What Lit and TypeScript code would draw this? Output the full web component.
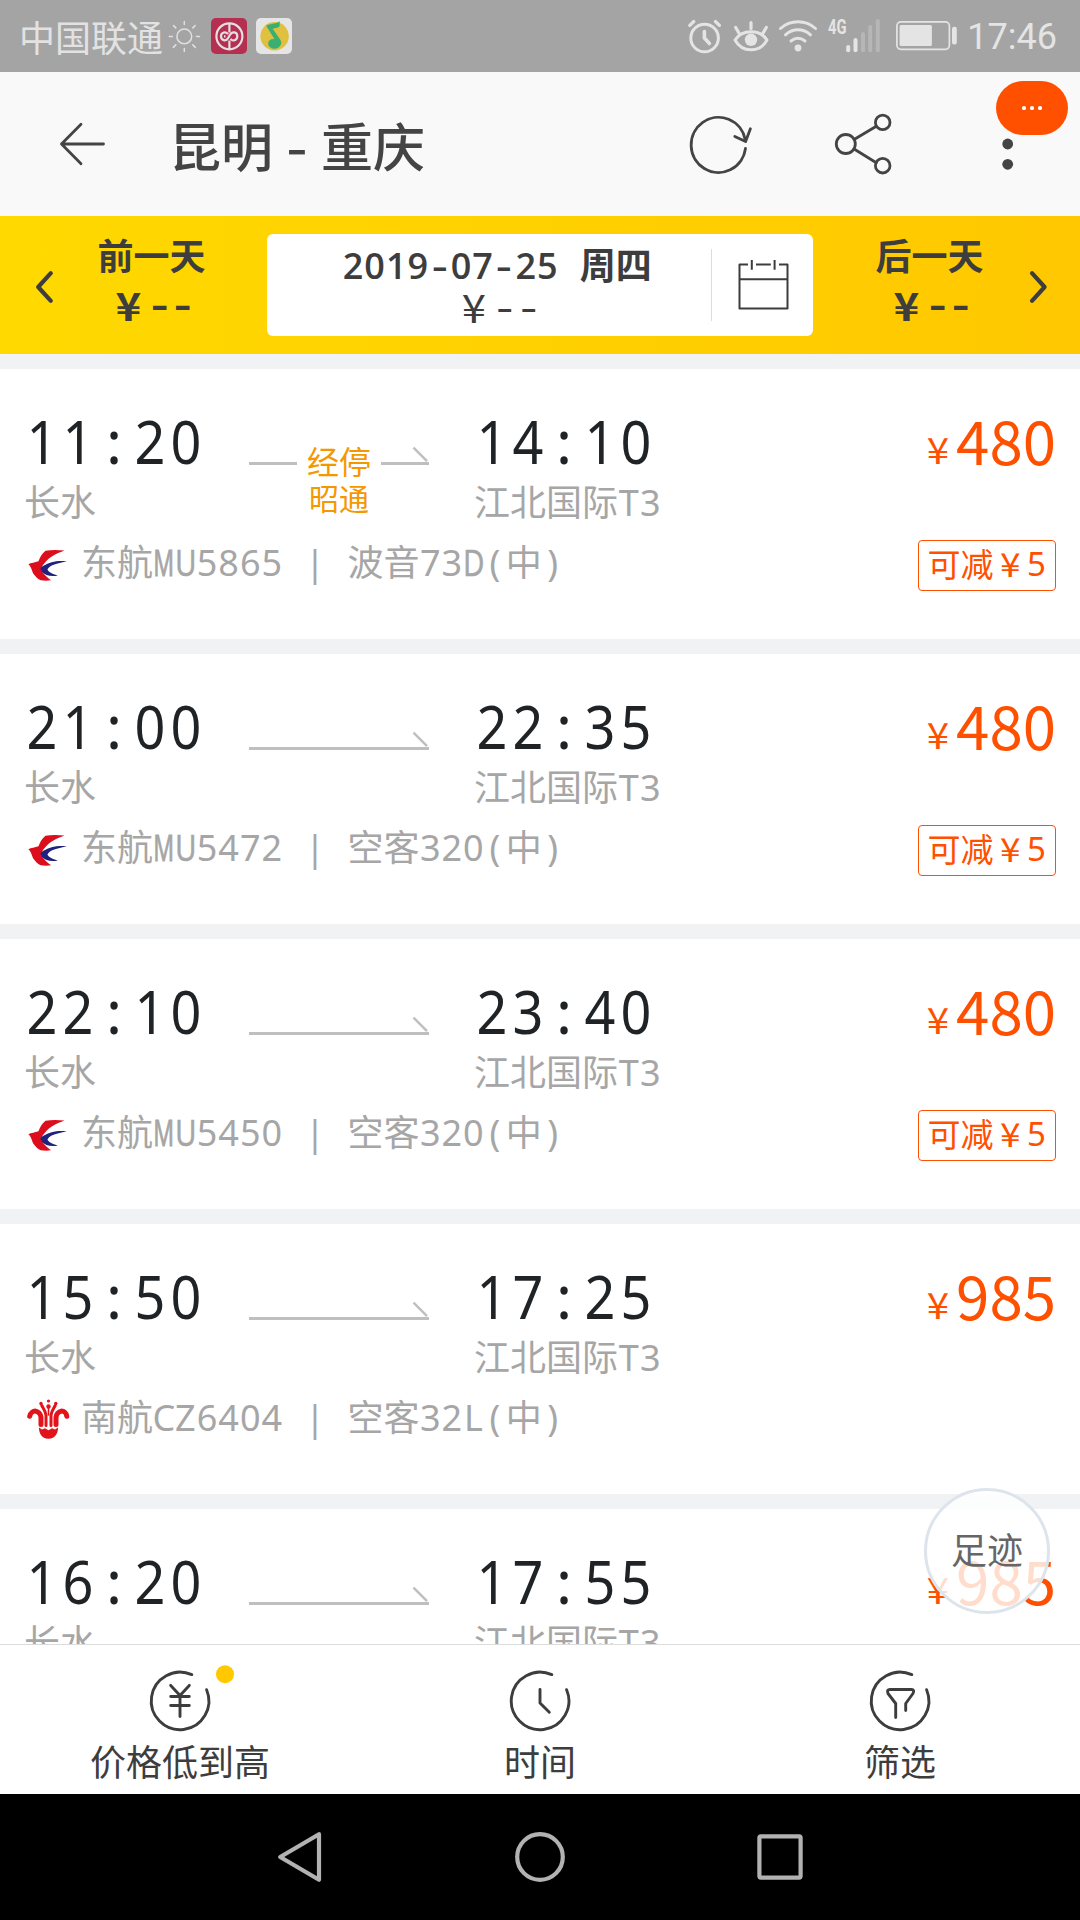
import { LitElement, html, svg, css, nothing } from "lit";
import { customElement, property } from "lit/decorators.js";

interface Flight {
  dep: string;
  arr: string;
  from: string;
  to: string;
  airline: "MU" | "CZ";
  flight: string;
  plane: string;
  price: string;
  discount?: string;
  stop?: string;
}

const flights: Flight[] = [
  { dep: "11:20", arr: "14:10", from: "长水", to: "江北国际T3", airline: "MU", flight: "东航MU5865", plane: "波音73D(中)", price: "480", discount: "可减¥5", stop: "昭通" },
  { dep: "21:00", arr: "22:35", from: "长水", to: "江北国际T3", airline: "MU", flight: "东航MU5472", plane: "空客320(中)", price: "480", discount: "可减¥5" },
  { dep: "22:10", arr: "23:40", from: "长水", to: "江北国际T3", airline: "MU", flight: "东航MU5450", plane: "空客320(中)", price: "480", discount: "可减¥5" },
  { dep: "15:50", arr: "17:25", from: "长水", to: "江北国际T3", airline: "CZ", flight: "南航CZ6404", plane: "空客32L(中)", price: "985" },
  { dep: "16:20", arr: "17:55", from: "长水", to: "江北国际T3", airline: "CZ", flight: "", plane: "", price: "985" },
];

/* Fixed-pitch text: digits, capitals and punctuation all advance 0.6em. */
const monoStyles = css`
  .digits { font-family: "Noto Sans", "Open Sans", sans-serif; letter-spacing: 0.028em; margin: 0 -0.014em 0 0.014em; }
  .cell { display: inline-flex; justify-content: center; width: 0.6em; white-space: pre; font-family: "Noto Sans", "Open Sans", sans-serif; }
  .wide { transform: scaleX(0.82); -webkit-text-stroke: 0.4px currentColor; }
  .widest { transform: scaleX(0.64); -webkit-text-stroke: 0.8px currentColor; }
  .dash { transform: scaleX(1.35); }
  .yuan { display: inline-flex; justify-content: center; width: 1em; font-family: "Noto Sans CJK SC", sans-serif; }
  .yuan i { font-style: normal; transform: scaleX(1.12); }
`;

function mono(text: string) {
  const runs = text.match(/[0-9]+|[A-Z :()|\-]|¥|[^0-9A-Z :()|\-¥]+/g) ?? [];
  return runs.map((run) => {
    if (/^[0-9]/.test(run)) return html`<span class="digits">${run}</span>`;
    if (run === "M") return html`<span class="cell widest">${run}</span>`;
    if (/^[UD]$/.test(run)) return html`<span class="cell wide">${run}</span>`;
    if (run === "-") return html`<span class="cell dash">${run}</span>`;
    if (run === "¥") return html`<span class="yuan"><i>${run}</i></span>`;
    if (/^[A-Z :()|]$/.test(run)) return html`<span class="cell">${run}</span>`;
    return html`<span>${run}</span>`;
  });
}

@customElement("status-bar")
class StatusBar extends LitElement {
  static styles = css`
    :host { display: flex; height: 72px; background: #a4a4a4; color: #e4e4e4; align-items: center; justify-content: space-between; padding: 0 23px 0 19px; box-sizing: border-box; }
    .side { display: flex; align-items: center; height: 72px; }
    .carrier { font: 36px/71px "Noto Sans CJK SC", sans-serif; color: #e2e2e2; }
    .clock { font: 36px/76px Roboto, sans-serif; padding-top: 2px; }
    svg { display: block; }
  `;
  render() {
    return html`
      <div class="side">
        <span class="carrier">中国联通</span>
        <svg width="132" height="72" viewBox="163 0 132 72">
          <g fill="none" stroke="#e0e0e0" stroke-width="1.5" stroke-linecap="round">
            <circle cx="184.3" cy="36.4" r="7.4" />
            <path d="M184.3 21.5v3M184.3 48.5v3M169.3 36.4h3M196.5 36.4h3M173.5 25.6l2.3 2.3M192.8 44.9l2.5 2.5M195.1 25.6l-2.3 2.3M175.8 44.9l-2.5 2.5" />
          </g>
          <rect x="211" y="18" width="36" height="36" rx="5" fill="#b52f51" />
          <g fill="none" stroke="#e6dfe1" stroke-width="2.2">
            <circle cx="229.4" cy="36.3" r="13" />
            <path d="M229.400 23v9.500M229.400 49.500v-9" />
            <path d="M225.500 36.300h-1.500M237.300 36.300c0-5-5.500-5-7.300-1.500l-2 3.500c-2 3.500-7 2-7-2s5-5.500 7-2M237.300 36.300c0 4-4.500 5.500-6.800 2.500" />
          </g>
          <rect x="256" y="18" width="36" height="36" rx="5" fill="#e5e5e5" />
          <circle cx="274.600" cy="36.300" r="14.200" fill="#dfc03f" />
          <path d="M266.200 25.800c3.300-2.600 9-1.200 13.600-4.600l-.3 5.200c-2.300 1.500-4.600 1.500-6.800 2.300l7.800 11.300c2.300 3.900-1 8.800-6 8.800-3.700 0-6.600-2.600-6.300-5.800.4-3 3.500-4.500 6.300-3.800z" fill="#3bae72" />
        </svg>
      </div>
      <div class="side">
        <svg width="279" height="72" viewBox="688 0 279 72">
          <g fill="none" stroke="#e4e4e4" stroke-width="3" stroke-linecap="round" stroke-linejoin="round">
            <circle cx="704.600" cy="38" r="13.800" />
            <path stroke-width="3.600" d="M704.400 31.500v6.500l5 5.500" />
            <path stroke-width="3.200" d="M689.800 25.400l4-3.900M719.400 25.400l-4-3.900" />
            <path d="M735 40c7-11 25-11 32 0-7 13-25 13-32 0z" />
            <path stroke-width="3.200" d="M751 22.500v6M735.700 27.500l3.500 6M766.300 27.500l-3.500 6" />
            <path d="M780.500 28.500c10-9 25-9 35 0M785.500 34.800c7.500-6.600 17.500-6.600 25 0M791 41c4.500-3.500 9.500-3.500 14 0" />
          </g>
          <circle cx="751" cy="39.800" r="6.200" fill="#e4e4e4" />
          <circle cx="798" cy="48" r="3.400" fill="#e4e4e4" />
          <text x="828" y="33.500" font-family="Roboto, sans-serif" font-weight="700" font-size="20" textLength="18.500" lengthAdjust="spacingAndGlyphs" fill="#e4e4e4">4G</text>
          <g fill="#e4e4e4">
            <rect x="846.200" y="45" width="4" height="7.200" rx="2" />
            <rect x="853.500" y="38" width="4" height="14.200" rx="2" />
          </g>
          <g fill="#b6b6b6">
            <rect x="861" y="32" width="4" height="20.200" rx="2" />
            <rect x="868.200" y="25" width="4" height="27.200" rx="2" />
            <rect x="875.800" y="19" width="4" height="33.200" rx="2" />
          </g>
          <rect x="896.900" y="21.900" width="52.500" height="27.400" rx="4" fill="none" stroke="#e4e4e4" stroke-width="1.700" />
          <rect x="899.600" y="25" width="32.300" height="21" rx="1.500" fill="#e4e4e4" />
          <rect x="952" y="26.800" width="4.800" height="17.600" rx="2" fill="#e4e4e4" />
        </svg>
        <span class="clock">17:46</span>
      </div>
    `;
  }
}

@customElement("title-bar")
class TitleBar extends LitElement {
  static styles = css`
    :host { display: flex; position: relative; height: 144px; background: #f9f9f9; align-items: center; justify-content: space-between; color: #444; padding: 0 6px 0 58px; box-sizing: border-box; }
    .left { display: flex; align-items: center; gap: 61px; }
    .title { display: flex; font: 500 52px/74px "Noto Sans CJK SC", sans-serif; padding-top: 2px; white-space: pre; }
    .title .dash { width: 48px; text-align: center; transform: scaleX(1.15); }
    svg { display: block; }
    .badge { position: absolute; left: 996px; top: 9px; width: 72px; height: 54px; border-radius: 27px; background: #ff5000; display: flex; align-items: center; justify-content: center; gap: 4.500px; }
    .badge i { width: 3.700px; height: 3.700px; border-radius: 50%; background: #fff; }
  `;
  render() {
    return html`
      <div class="left">
        <svg width="50" height="60" viewBox="58 114 50 60" fill="none" stroke="#444" stroke-width="2.800" stroke-linecap="round" stroke-linejoin="round">
          <path d="M103.500 144H61.500M81 124.300L61.500 144 81 163.700" />
        </svg>
        <span class="title"><span>昆明</span><span class="dash"> - </span><span>重庆</span></span>
      </div>
      <svg width="390" height="144" viewBox="684 72 390 144">
        <g fill="none" stroke="#444" stroke-width="2.800" stroke-linecap="round" stroke-linejoin="round">
          <path d="M745.500 148.500A27.300 27.600 0 1 1 745.200 139.500" />
          <path d="M734.800 136.400L745.600 141.600 750.400 128.800" />
          <circle cx="845.800" cy="144" r="9.500" />
          <circle cx="882.700" cy="122.400" r="7.300" />
          <circle cx="882.700" cy="165.700" r="7.300" />
          <path d="M854.500 139.300L876.300 126.200M854.500 149.300L876.300 162.700" />
        </g>
        <circle cx="1007.700" cy="144" r="5.400" fill="#444" />
        <circle cx="1007.700" cy="164.300" r="5.400" fill="#444" />
      </svg>
      <div class="badge"><i></i><i></i><i></i></div>
    `;
  }
}

@customElement("date-bar")
class DateBar extends LitElement {
  static styles = [monoStyles, css`
    :host { display: grid; grid-template-columns: 56px 191px 20px 546px 233px 34px; height: 138px; background: linear-gradient(90deg, #ffd900, #ffc800); color: #3d3d3d; align-items: center; font-family: "Noto Sans CJK SC", sans-serif; }
    svg { display: block; }
    .day { display: flex; flex-direction: column; align-items: center; font-weight: 600; height: 138px; box-sizing: border-box; padding-top: 11px; }
    .day .name { font-size: 36px; line-height: 54px; }
    .fare { display: flex; font-size: 39px; line-height: 46px; height: 46px; white-space: nowrap; }
    .box { grid-column: 4; display: flex; height: 102px; border-radius: 6px; background: #fff; align-items: center; }
    .date { flex: 1; display: flex; flex-direction: column; align-items: center; height: 102px; padding-left: 16px; }
    .full { font-size: 36px; line-height: 54px; height: 54px; font-weight: 600; margin-top: 2px; white-space: nowrap; }
    .full .digits, .full .cell { font-family: "Open Sans", "Noto Sans", sans-serif; }
    .date .fare { margin-top: -7px; }
    .icon { border-left: 1px solid #dcdcdc; height: 72px; width: 101px; display: flex; align-items: center; justify-content: center; }
    .icon svg { margin-top: -2px; }
  `];
  render() {
    return html`
      <svg width="56" height="138" viewBox="0 216 56 138" fill="none" stroke="#3d3d3d" stroke-width="4.200" stroke-linecap="round" stroke-linejoin="round"><path d="M50.800 273.200L38.200 287 50.800 300.800" /></svg>
      <div class="day"><span class="name">前一天</span><span class="fare">${mono("¥--")}</span></div>
      <div class="box">
        <div class="date">
          <span class="full">${mono("2019-07-25 周四")}</span>
          <span class="fare">${mono("¥--")}</span>
        </div>
        <div class="icon">
          <svg width="54" height="54" viewBox="736 256 54 54" fill="none" stroke="#3d3d3d" stroke-width="2" stroke-linejoin="round">
            <path d="M748 263.500h-8.500v44h48v-44h-8.500M756 263.500h14.800M739.500 278.200h48M751.800 259v9.800M774.600 259v9.800" />
          </svg>
        </div>
      </div>
      <div class="day"><span class="name">后一天</span><span class="fare">${mono("¥--")}</span></div>
      <svg width="34" height="138" viewBox="1046 216 34 138" fill="none" stroke="#3d3d3d" stroke-width="4.200" stroke-linecap="round" stroke-linejoin="round" overflow="visible"><path d="M1032 273.200L1044.600 287 1032 300.800" /></svg>
    `;
  }
}

const muLogo = svg`
  <path fill="#dc0d1c" d="M37.500 6.500C31 5.800 24 5.800 18.500 6.700 14.500 10 13 13.500 11.500 17.300 8 18.300 4 19 1.400 20.300 3.600 22 4.500 25 6 29.300 8.500 32.500 11 35.500 13.800 36.200 17 36.800 21 36.800 24 36.300 20.500 34 17 30.500 14.500 26.500 14 23.500 15.500 21 18.500 18 20.500 15.500 23 13.300 26.400 11.500 30 9.500 33.500 8 37.500 6.500z"/>
  <path fill="#20217c" d="M39.800 17.300C34 16.600 29 17 24.700 18.300 18.500 20.500 14 22.500 13.500 24.700 14 27.500 16.500 29.500 19.500 31 23 32.300 27 32.300 30.900 31.500 27.500 30.700 24.500 29.500 22.500 28 20.800 26.700 20.200 25.800 20.700 25 21.700 23.500 23 22.500 24.700 21.500 29 19.600 34 18.900 39.800 17.300z"/>`;

const czLogo = svg`
  <g fill="none" stroke="#e2131b" stroke-linecap="round">
    <path stroke-width="5" d="M14 25.500V18.500C13.500 11 4.500 9.500 2.700 17.300"/>
    <path stroke-width="5" d="M29 25.500V18.500C29.500 11 38.500 9.500 39.800 17.300"/>
    <path stroke-width="3" d="M19 26.500V16C18.500 12 16 9 14.800 6.500M24 26.500V16C24.500 12 27 9 28.200 6.500"/>
    <path stroke-width="1.600" d="M21.500 16V7"/>
  </g>
  <g fill="#e2131b">
    <circle cx="14" cy="4.500" r="1.700"/><circle cx="21.500" cy="2" r="1.600"/><circle cx="28.800" cy="4.500" r="1.700"/><circle cx="21.500" cy="7.500" r="2.200"/>
    <path d="M12 28.500l3 2 3-1.200 3.500 2 3.500-2 3 1.200 3-2c.3 5-2.500 11.300-9.500 11.300s-9.800-6.300-9.500-11.300z"/>
  </g>`;

@customElement("flight-card")
class FlightCard extends LitElement {
  @property({ attribute: false }) flight!: Flight;
  static styles = [monoStyles, css`
    :host { display: block; height: 270px; flex: none; background: #fff; font-family: "Noto Sans CJK SC", sans-serif; box-sizing: border-box; padding: 38px 24px 0; }
    .route { display: grid; grid-template-columns: 225px 225px 1fr auto; height: 116px; }
    .time { display: flex; font-size: 60px; line-height: 70px; height: 70px; margin-top: -1px; margin-bottom: 1px; color: #1f2326; white-space: nowrap; }
    /* Two narrowed digits fill 1.2em. */
    .time .digits { letter-spacing: 0.095em; margin: 0 -0.067em; transform: translateX(0.043em) scaleX(0.9); }
    .airport { font-size: 36px; line-height: 46px; height: 46px; color: #a6a6a6; white-space: nowrap; }
    .path { display: flex; flex-direction: column; align-items: center; width: 180px; }
    .shaft { display: flex; width: 180px; height: 70px; align-items: flex-start; justify-content: space-between; color: #f39800; font-size: 32px; line-height: 40px; }
    .shaft svg { display: block; flex: none; }
    .shaft span { margin-top: 33px; }
    .stop { color: #f39800; font-size: 30px; line-height: 40px; height: 40px; margin-top: 0; }
    .price { display: flex; color: #ff5000; line-height: 64px; height: 70px; align-items: baseline; }
    .yen { font-size: 36px; position: relative; top: -1px; }
    .num { font-size: 60px; }
    .meta { display: flex; height: 52px; margin-top: 14px; align-items: flex-start; justify-content: space-between; }
    .info { display: flex; height: 46px; font-size: 36px; line-height: 46px; color: #a6a6a6; padding-left: 2px; white-space: nowrap; }
    .info svg { display: block; margin: 7px 11px 0 0; flex: none; }
    .tag { display: flex; justify-content: center; box-sizing: border-box; height: 51px; width: 138px; border: 1px solid #ff5000; border-radius: 4px; color: #ff5000; font-size: 33px; line-height: 45px; margin-top: 3px; white-space: nowrap; }
  `];
  render() {
    const f = this.flight;
    const head = svg`<path d="M164.500 47.700L178 61.200" fill="none" stroke="#bfbfbf" stroke-width="2.400"/>`;
    return html`
      <div class="route">
        <div><div class="time">${mono(f.dep)}</div><div class="airport">${mono(f.from)}</div></div>
        <div class="path">
          <div class="shaft">
            ${f.stop
              ? html`<svg width="48" height="70"><rect y="55" width="48" height="3" fill="#bfbfbf" /></svg>
                  <span>经停</span>
                  <svg width="48" height="70" viewBox="132 7 48 70"><rect x="132" y="62" width="48" height="3" fill="#bfbfbf" />${head}</svg>`
              : html`<svg width="180" height="70" viewBox="0 7 180 70"><rect y="62" width="180" height="3" fill="#bfbfbf" />${head}</svg>`}
          </div>
          ${f.stop ? html`<div class="stop">${f.stop}</div>` : nothing}
        </div>
        <div><div class="time">${mono(f.arr)}</div><div class="airport">${mono(f.to)}</div></div>
        <div class="price"><span class="yen">${mono("¥")}</span><span class="num">${f.price}</span></div>
      </div>
      ${f.flight
        ? html`<div class="meta">
            <div class="info">
              <svg width="44" height="42" viewBox="-1 0 44 42">${f.airline === "MU" ? muLogo : czLogo}</svg>
              <span>${mono(`${f.flight} | ${f.plane}`)}</span>
            </div>
            ${f.discount ? html`<div class="tag">${mono(f.discount)}</div>` : nothing}
          </div>`
        : nothing}
    `;
  }
}

@customElement("sort-bar")
class SortBar extends LitElement {
  static styles = css`
    :host { display: grid; grid-template-columns: repeat(3, 1fr); height: 150px; box-sizing: border-box; border-top: 1px solid #dcdcdc; background: #fff; color: #3d3d3d; }
    .tab { display: flex; flex-direction: column; align-items: center; font: 36px/46px "Noto Sans CJK SC", sans-serif; padding-top: 18px; }
    svg { display: block; margin-bottom: -2px; }
  `;
  render() {
    const ring = svg`<path d="M26.600 -11.300A28.800 28.800 0 1 1 11.800 -26.400"/>`;
    const icons = [
      { label: "价格低到高", art: svg`<path d="M-9.300 -15.600L0 -5.500 9.300 -15.600M-9.300 -4.500H9.300M-9.300 4.500H9.300M0 -5.500V15.500"/><circle cx="45" cy="-26.800" r="9" fill="#ffc800" stroke="none"/>` },
      { label: "时间", art: svg`<path d="M0 -11.500V2L9.300 11.300"/>` },
      { label: "筛选", art: svg`<path d="M-4.300 16.500V2.500L-12 -7.500Q-13.500 -11.500 -10 -11.500H11.500Q14.800 -11.500 13 -7.500L5.700 2.500V9.500"/>` },
    ];
    return icons.map((i) => html`
      <div class="tab">
        <svg width="120" height="76" viewBox="-60 -38 120 76" fill="none" stroke="#3d3d3d" stroke-width="2.900" stroke-linecap="round" stroke-linejoin="round">${ring}${i.art}</svg>
        <span>${i.label}</span>
      </div>`);
  }
}

@customElement("nav-keys")
class NavKeys extends LitElement {
  static styles = css`
    :host { display: flex; height: 126px; background: #000; justify-content: center; gap: 180px; align-items: center; }
    svg { display: block; }
  `;
  render() {
    const wrap = (shape: unknown) => html`<svg width="60" height="60" viewBox="-30 -30 60 60" fill="none" stroke="#b2b2b2" stroke-width="4.200" stroke-linejoin="round">${shape}</svg>`;
    return html`
      ${wrap(svg`<path d="M19 -22.800L-19.800 0 19 22.800z"/>`)}
      ${wrap(svg`<circle r="22.800"/>`)}
      ${wrap(svg`<rect x="-20.600" y="-20.600" width="41.200" height="41.200" rx="1.500"/>`)}
    `;
  }
}

@customElement("app-root")
class AppRoot extends LitElement {
  static styles = css`
    :host { display: flex; flex-direction: column; position: relative; width: 1080px; height: 1920px; overflow: hidden; background: #fff; }
    .list { flex: 1; min-height: 0; overflow: hidden; display: flex; flex-direction: column; gap: 15px; padding-top: 15px; background: #f1f2f4; }
    .trail { position: absolute; left: 924px; top: 1488px; width: 126px; height: 126px; box-sizing: border-box; border: 3px solid #dde4ec; border-radius: 50%; background: rgba(255, 255, 255, 0.8); color: #666; font: 36px/114px "Noto Sans CJK SC", sans-serif; text-align: center; }
  `;
  render() {
    return html`
      <status-bar></status-bar>
      <title-bar></title-bar>
      <date-bar></date-bar>
      <div class="list">${flights.map((f) => html`<flight-card .flight=${f}></flight-card>`)}</div>
      <sort-bar></sort-bar>
      <nav-keys></nav-keys>
      <div class="trail">足迹</div>
    `;
  }
}
